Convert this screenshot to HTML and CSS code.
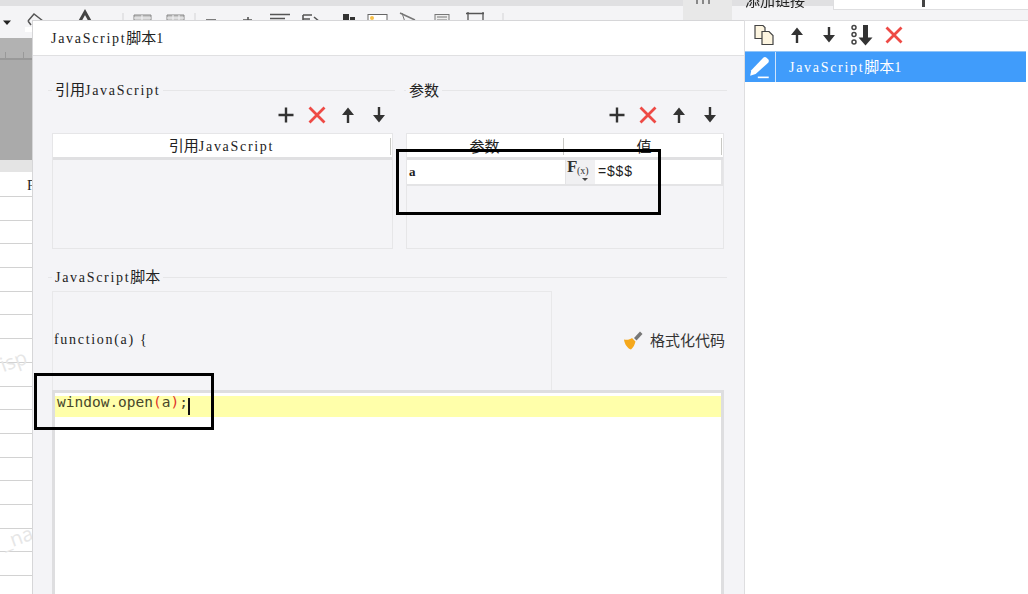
FILE: index.html
```html
<!DOCTYPE html>
<html lang="zh">
<head>
<meta charset="utf-8">
<title>JavaScript脚本</title>
<link rel="stylesheet" href="styles.css">
</head>
<body>
<svg class="defs" width="0" height="0" aria-hidden="true">
  <symbol id="i-plus" viewBox="0 0 18 18"><path d="M9 1.500v15M1.500 9h15" stroke="#333" stroke-width="2.400" fill="none"/></symbol>
  <symbol id="i-x" viewBox="0 0 18 18"><path d="M1.500 1.500l15 15M16.500 1.500l-15 15" stroke="#ee4a45" stroke-width="2.800" fill="none"/></symbol>
  <symbol id="i-up" viewBox="0 0 18 18"><path d="M9 1.500L15 9H10.200V17H7.800V9H3z" fill="#333"/></symbol>
  <symbol id="i-down" viewBox="0 0 18 18"><path d="M9 16.500L15 9H10.200V1H7.800V9H3z" fill="#333"/></symbol>
</svg>
<div class="stage">
  <div class="app">
    <div class="topstrip"></div>
    <div class="ribbon">
      <svg class="ribbon-icons" width="683" height="32" viewBox="0 0 683 32" aria-hidden="true">
        <path d="M3 20.500h8l-4 4.500z" fill="#222"/>
        <path d="M28 21l6-7 9 7M28 21l3 4" stroke="#555" stroke-width="1.500" fill="none"/>
        <rect x="25" y="27" width="7" height="5" fill="#fff"/>
        <path d="M80 21l5-9 5 9" stroke="#444" stroke-width="3" fill="none"/>
        <path d="M123 13v9M195 13v9M503 13v9" stroke="#d4d4d6" stroke-width="1"/>
        <path d="M134 15h17v7h-17zM167 15h17v7h-17z" fill="#c9c9c9" stroke="#888"/>
        <path d="M134 18h17M167 18h17M142 15v7M173 15v7M179 15v7" stroke="#f4f4f6"/>
        <path d="M206 20h10M243 20h9M248 17v5M270 14.500h20M270 18.500h15" stroke="#555" stroke-width="1.600"/>
        <path d="M303 15h9M303 15v7M303 19h7M314 17l6 5" stroke="#555" stroke-width="1.600" fill="none"/>
        <path d="M343 14h6v8h-6zM350 17h5v5h-5z" fill="#333"/>
        <rect x="368" y="14.500" width="19" height="8" fill="#fff" stroke="#666"/>
        <circle cx="372" cy="18" r="2" fill="#f7c04a"/>
        <path d="M400 13l15 7" stroke="#777" stroke-width="1.500"/><path d="M402 13l3 9" stroke="#777"/>
        <rect x="435" y="14.500" width="14" height="8" fill="#eee" stroke="#777"/>
        <path d="M437 17h10M437 20h10" stroke="#777"/>
        <path d="M466 13.500h18M468 12v10M483 12v10" stroke="#555" stroke-width="1.300" fill="none"/>
      </svg>
      <div class="ribbon-tab"><span class="tab-dots"></span></div>
      <div class="ribbon-side">
        <span class="side-label cjk">添加链接</span>
        <div class="side-box"><span class="side-plus"></span></div>
      </div>
    </div>
    <div class="ruler"></div>
    <div class="canvas-gray"></div>
    <div class="sheet-head"></div>
    <div class="sheet">
      <div class="sheet-row sheet-row-first"><span class="sheet-letter">F</span></div>
      <div class="sheet-row"></div><div class="sheet-row"></div><div class="sheet-row"></div>
      <div class="sheet-row"></div><div class="sheet-row"></div><div class="sheet-row"></div>
      <div class="sheet-row"></div><div class="sheet-row"></div><div class="sheet-row"></div>
      <div class="sheet-row"></div><div class="sheet-row"></div><div class="sheet-row"></div>
      <div class="sheet-row"></div><div class="sheet-row"></div><div class="sheet-row"></div>
      <div class="sheet-row"></div><div class="sheet-row"></div>
    </div>
  </div>
  <span class="watermark wm-a">isp</span>
  <span class="watermark wm-b">_na</span>

  <section class="dialog">
    <header class="dialog-title txt"><span>JavaScript<span class="cjk">脚本</span>1</span></header>
    <div class="dialog-body">
      <div class="two-col">
        <div class="col col-left">
          <div class="legend txt"><span class="legend-text"><span class="cjk">引用</span>JavaScript</span></div>
          <div class="tools">
            <svg class="tool"><use href="#i-plus"/></svg><svg class="tool"><use href="#i-x"/></svg><svg class="tool"><use href="#i-up"/></svg><svg class="tool"><use href="#i-down"/></svg>
          </div>
          <div class="table txt">
            <div class="thead"><div class="th th-sep th-ref"><span><span class="cjk">引用</span>JavaScript</span></div></div>
          </div>
        </div>
        <div class="col col-right">
          <div class="legend txt"><span class="legend-text cjk">参数</span></div>
          <div class="tools">
            <svg class="tool"><use href="#i-plus"/></svg><svg class="tool"><use href="#i-x"/></svg><svg class="tool"><use href="#i-up"/></svg><svg class="tool"><use href="#i-down"/></svg>
          </div>
          <div class="table txt">
            <div class="thead">
              <div class="th th-name th-sep"><span class="cjk">参数</span></div>
              <div class="th th-value th-sep"><span class="cjk">值</span></div>
            </div>
            <div class="param-row">
              <div class="param-name">a</div>
              <div class="fx"><span class="fx-f">F</span><span class="fx-x">(x)</span><span class="fx-caret"></span></div>
              <div class="param-value">=$$$</div>
            </div>
          </div>
        </div>
      </div>
      <div class="legend legend-script txt"><span class="legend-text">JavaScript<span class="cjk">脚本</span></span></div>
      <div class="script-top">
        <div class="fn-box txt"><span>function(a) {</span></div>
        <div class="format">
          <svg class="broom" width="20" height="20" viewBox="0 0 20 20" aria-hidden="true">
            <path d="M11 8L17 1.500 19.500 4l-6 6.500z" fill="#777"/>
            <path d="M1 9.500c3 .8 6 .2 8-1.500l3.500 3.500c-.8 3.200-2 6-4.500 8C4.500 18.500 1.500 14 1 9.500z" fill="#f5a81c"/>
          </svg>
          <span class="cjk format-text">格式化代码</span>
        </div>
      </div>
      <div class="editor">
        <div class="code-line"><span class="code-text">window.open<span class="paren">(</span>a<span class="paren">)</span>;</span><span class="caret"></span></div>
      </div>
    </div>
  </section>

  <aside class="panel">
    <div class="panel-tools">
      <svg class="ptool ptool-solid" viewBox="0 0 22 22" aria-hidden="true">
        <path d="M2 1.500h8l2 2v11H2z" fill="#fdf5e0" stroke="#444" stroke-width="1.200"/>
        <path d="M9 7.500h7l4 4v9H9z" fill="#fdf5e0" stroke="#444" stroke-width="1.200"/>
      </svg>
      <svg class="ptool"><use href="#i-up"/></svg>
      <svg class="ptool"><use href="#i-down"/></svg>
      <svg class="ptool ptool-solid" viewBox="0 0 22 22" aria-hidden="true">
        <circle cx="3" cy="3.500" r="2" fill="none" stroke="#444" stroke-width="1.500"/>
        <circle cx="3" cy="10.500" r="2" fill="none" stroke="#444" stroke-width="1.500"/>
        <circle cx="3" cy="18" r="2" fill="none" stroke="#444" stroke-width="1.500"/>
        <path d="M14.500 21.500l-7-8h4.500V1h5v12.500h4.500z" fill="#333"/>
      </svg>
      <svg class="ptool"><use href="#i-x"/></svg>
    </div>
    <div class="list-item txt">
      <div class="item-icon">
        <svg width="24" height="24" viewBox="0 0 22 22" aria-hidden="true">
          <path d="M3 14L14 2.500c1-1 2-1 3 0l1.500 1.500c.8 1 .8 2 0 3L7 17.500l-5 1.500z" fill="#fff"/>
          <path d="M9 20.500h10" stroke="#fff" stroke-width="1.500"/>
        </svg>
      </div>
      <div class="item-text"><span>JavaScript<span class="cjk">脚本</span>1</span></div>
    </div>
  </aside>

  <div class="mark mark-param"></div>
  <div class="mark mark-code"></div>
</div>
</body>
</html>
```
FILE: styles.css
```css
* { box-sizing: border-box; }
html, body { margin: 0; padding: 0; background: #fff; }
.defs { position: absolute; }
.stage {
  position: relative;
  width: 1028px;
  height: 594px;
  overflow: hidden;
  filter: blur(0.4px);
  color: #222;
}
.txt { font: 14px/16px "Liberation Serif", "Noto Sans CJK SC", serif; letter-spacing: 1.7px; }
.cjk { font-family: "Noto Sans CJK SC", "Liberation Sans", sans-serif; font-size: 15px; letter-spacing: 0; }

/* Backdrop application */
.app { display: flex; flex-direction: column; height: 594px; }
.topstrip { height: 6px; background: #e0e0e2; }
.ribbon { position: relative; height: 32px; background: #f4f4f6; flex: none; display: flex; }
.ribbon-icons { flex: none; margin-top: -6px; }
.ribbon-tab { flex: none; width: 49px; margin-top: -6px; height: 27px; background: #e8e8e8; }
.tab-dots { display: block; width: 16px; height: 4px; margin: 0 0 0 13px; background: repeating-linear-gradient(90deg, #888 0 2px, transparent 2px 6px); }
.ribbon-side { flex: 1; margin-top: -6px; display: flex; padding-left: 13px; height: 20px; }
.side-label { line-height: 15px; margin-top: -8px; width: 88px; flex: none; }
.side-box { flex: 1; height: 10px; background: #fff; border: solid #dedee0; border-width: 0 0 1px 1px; display: flex; justify-content: flex-start; padding-left: 88px; }
.side-plus { width: 3px; height: 7px; background: #444; }
.ruler { height: 22px; flex: none; background: #b2b2b2 repeating-linear-gradient(90deg, transparent 0 5px, #999 5px 6px, transparent 6px 18px) 0 14px / 100% 6px no-repeat; border-bottom: 2px solid #999; }
.canvas-gray { height: 100px; flex: none; background: #aaa; }
.sheet-head { height: 12px; flex: none; background: #e4e4e4; }
.sheet { flex: 1; background: #fff; overflow: hidden; }
.sheet-row { height: 23.700px; border-bottom: 1.500px solid #d2d2d2; }
.sheet-row-first { height: 25px; }
.sheet-letter { display: block; font: 14px/27px "Liberation Serif", serif; padding-left: 27px; }
.watermark { position: absolute; color: #e6e6e6; font: 20px "Open Sans", sans-serif; transform: rotate(-20deg); }
.wm-a { left: 0; top: 347px; }
.wm-b { left: 1px; top: 524px; }

/* Dialog window */
.dialog {
  position: absolute;
  left: 32px;
  top: 20px;
  width: 713px;
  height: 574px;
  background: #f4f4f7;
  border: solid #d6d6d8;
  border-width: 1px 1px 0 1px;
  display: flex;
  flex-direction: column;
}
.dialog-title { height: 35px; flex: none; background: #fff; border-bottom: 1px solid #e0e0e2; padding-left: 18px; display: flex; align-items: center; }
.dialog-body { flex: 1; padding: 26px 19px 0 19px; display: flex; flex-direction: column; min-height: 0; }
.two-col { display: flex; gap: 13px; flex: none; }
.col-left { width: 341px; }
.col-right { width: 318px; }
.legend { position: relative; height: 16px; display: flex; align-items: center; margin: 0 -2px 0 -4px; padding-left: 7px; }
.legend::before { content: ""; position: absolute; left: 0; right: 0; top: 8px; border-top: 1px solid #e6e6e8; }
.legend-text { position: relative; background: #f4f4f7; color: #222; margin-left: -3px; padding: 0 3px; }
.col-right .legend { padding-left: 5px; margin-left: -2px; margin-right: -3px; }
.tools { display: flex; justify-content: flex-end; gap: 13px; height: 35px; padding: 8px 5px 0 0; }
.tool { width: 18px; height: 18px; }
.table { height: 116px; background: #f4f4f7; border: 1px solid #e6e6e8; }
.thead { height: 26px; display: flex; background: #fff; border-bottom: 3px solid #e0e0e2; }
.th { flex: 1; display: flex; align-items: center; justify-content: center; position: relative; }
.th-ref { padding-right: 2px; }
.th-sep::after { content: ""; position: absolute; right: 1px; top: 4px; bottom: 2px; border-right: 1px solid #c8c8c4; }
.th-name { flex: none; width: 158px; padding-right: 3px; }
.th-value { flex: 1; }
.param-row { display: flex; height: 26px; background: #e4e4e6; padding-bottom: 1px; padding-right: 2px; }
.param-name { width: 158px; background: #fff; font: bold 13px/24px "Liberation Serif", serif; padding-left: 2px; margin-bottom: 1px; letter-spacing: 0; }
.fx { width: 29px; position: relative; background: #f0f0f2; margin-left: 1px; margin-bottom: 1px; font-family: "Liberation Serif", serif; color: #333; letter-spacing: 0; }
.fx-f { position: absolute; left: 1px; top: -1px; font-size: 17px; font-weight: bold; }
.fx-x { position: absolute; left: 11px; top: 3px; font-size: 10px; }
.fx-caret { position: absolute; left: 16px; top: 18px; border: 3px solid transparent; border-top: 3px solid #444; }
.param-value { flex: 1; background: #fff; font: 14px/23px "Liberation Sans", sans-serif; padding-left: 3px; letter-spacing: 0.800px; margin-bottom: 1px; }

.legend-script { margin-top: 20px; }
.script-top { display: flex; height: 99px; margin-top: 6px; flex: none; }
.fn-box { width: 500px; border: 1px solid #e8e8ea; border-bottom: 0; display: flex; align-items: center; padding: 0 0 3px 1px; }
.format { flex: 1; display: flex; align-items: center; justify-content: flex-end; gap: 7px; padding: 0 0 2px 0; }
.format-text { color: #333; }
.broom { flex: none; }
.editor { width: 672px; flex: 1; background: #fff; border: 3px solid #dedee0; border-bottom: 0; padding-top: 3px; }
.code-line { height: 21px; background: #ffffaa; padding-left: 2px; font: 14.500px/12px "DejaVu Sans Mono", monospace; color: #47472a; display: flex; align-items: flex-start; white-space: pre; }
.code-text { display: block; }
.paren { color: #e0352a; }
.caret { display: block; width: 2.500px; height: 17px; margin: 2px 0 0 0; background: #111; }

/* Right panel */
.panel { position: absolute; left: 744px; top: 20px; width: 284px; height: 574px; background: #fff; border: solid #dedee0; border-width: 1px 0 0 1px; }
.panel-tools { height: 30px; display: flex; align-items: center; gap: 10.500px; padding: 0 0 2px 8px; }
.ptool { width: 22px; height: 22px; padding: 2px; flex: none; overflow: visible; }
.ptool-solid { padding: 0; }
.list-item { height: 31px; margin-right: 2px; background: #409cfb; color: #fff; display: flex; border-top: 1px solid #90c4f8; }
.item-icon { width: 31px; border-right: 1px solid #cfe4fb; display: flex; align-items: center; justify-content: center; }
.item-text { padding-left: 13px; display: flex; align-items: center; }

/* Annotation marks */
.mark { position: absolute; border: 3px solid #000; }
.mark-param { left: 396px; top: 149px; width: 265px; height: 66px; }
.mark-code { left: 34px; top: 373px; width: 180px; height: 57px; }
```
